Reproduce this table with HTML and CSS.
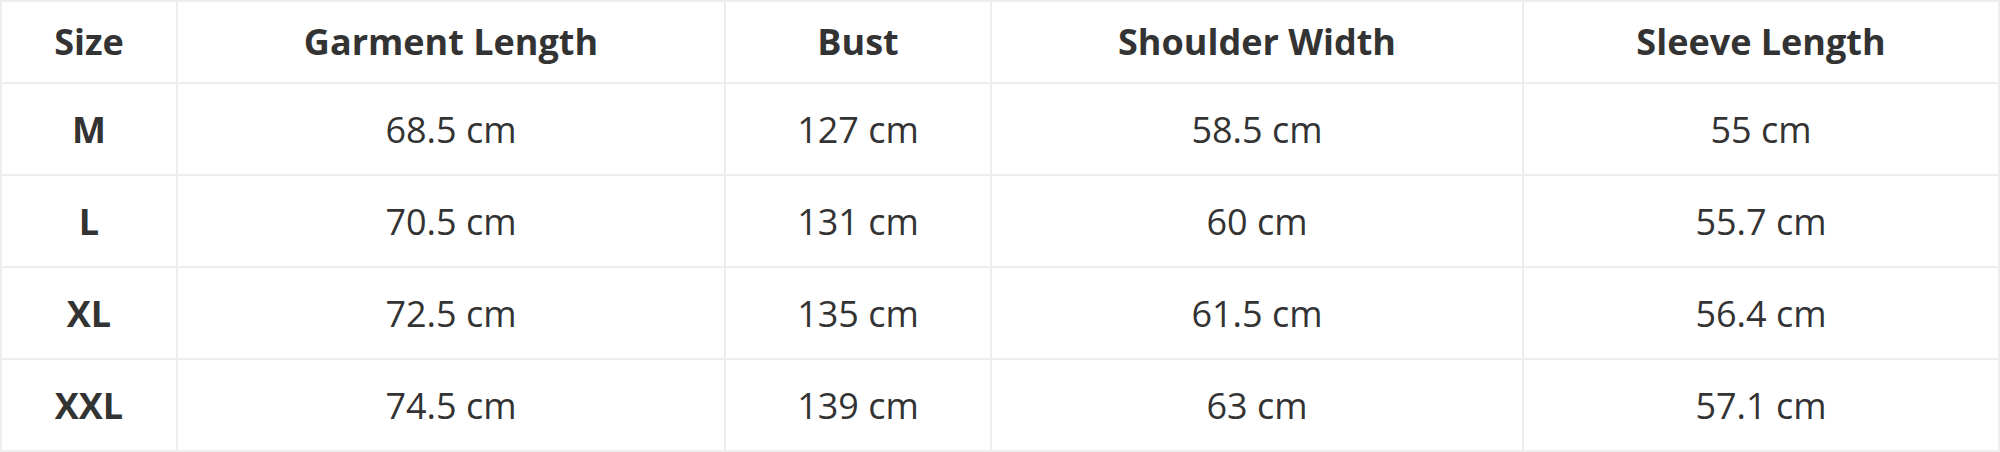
FILE: index.html
```html
<!DOCTYPE html>
<html>
<head>
<meta charset="utf-8">
<link rel="stylesheet" href="styles.css">
</head>
<body>
<div class="size-table">
  <div class="cell head">Size</div>
  <div class="cell head">Garment Length</div>
  <div class="cell head">Bust</div>
  <div class="cell head">Shoulder Width</div>
  <div class="cell head">Sleeve Length</div>

  <div class="cell label">M</div>
  <div class="cell">68.5 cm</div>
  <div class="cell">127 cm</div>
  <div class="cell">58.5 cm</div>
  <div class="cell">55 cm</div>

  <div class="cell label">L</div>
  <div class="cell">70.5 cm</div>
  <div class="cell">131 cm</div>
  <div class="cell">60 cm</div>
  <div class="cell">55.7 cm</div>

  <div class="cell label">XL</div>
  <div class="cell">72.5 cm</div>
  <div class="cell">135 cm</div>
  <div class="cell">61.5 cm</div>
  <div class="cell">56.4 cm</div>

  <div class="cell label">XXL</div>
  <div class="cell">74.5 cm</div>
  <div class="cell">139 cm</div>
  <div class="cell">63 cm</div>
  <div class="cell">57.1 cm</div>
</div>
</body>
</html>
```
FILE: styles.css
```css
html, body {
  margin: 0;
  padding: 0;
  background: #fff;
}
body {
  font-family: "Open Sans", "Noto Sans", sans-serif;
  color: #333;
}
.size-table {
  display: grid;
  grid-template-columns: 176px 548px 266px 532px 476px;
  grid-template-rows: 82px repeat(4, 92px);
  border-top: 2px solid #eee;
  border-left: 2px solid #eee;
  width: 2000px;
  box-sizing: border-box;
}
.cell {
  box-sizing: border-box;
  border-right: 2px solid #eee;
  border-bottom: 2px solid #eee;
  display: flex;
  align-items: center;
  justify-content: center;
  padding-top: 2px;
  font-size: 36px;
  font-weight: 400;
  line-height: 1;
}
.head {
  padding-top: 0;
}
.head, .label {
  font-weight: 700;
}
```
